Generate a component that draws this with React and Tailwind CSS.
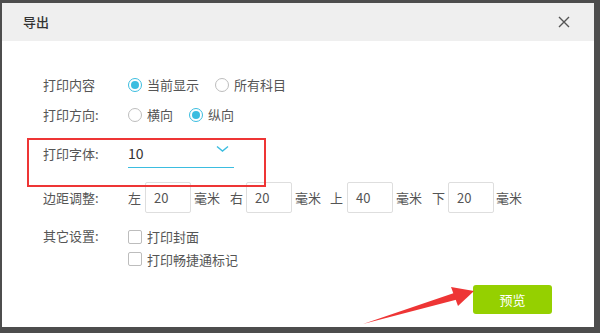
import React from 'react';

const font = { fontFamily: '"Noto Sans CJK SC", "Noto Sans", sans-serif' };

function Radio({ checked, label }) {
  return (
    <label className="flex items-center gap-[5px]">
      <span
        className={
          checked
            ? 'w-[14px] h-[14px] rounded-full border border-[#3bbde0] flex items-center justify-center'
            : 'w-[14px] h-[14px] rounded-full border border-[#bdbdbd]'
        }
      >
        {checked && <span className="w-[8px] h-[8px] rounded-full bg-[#3bbde0]" />}
      </span>
      <span>{label}</span>
    </label>
  );
}

function Check({ label }) {
  return (
    <label className="flex items-center gap-[5px]">
      <span className="w-[14px] h-[14px] rounded-[2px] border border-[#bdbdbd]" />
      <span>{label}</span>
    </label>
  );
}

function MarginInput({ value }) {
  return (
    <div className="w-[46px] h-[31px] border border-[#dedede] rounded-[2px] flex items-center pl-[8px]">
      {value}
    </div>
  );
}

export default function App() {
  return (
    <div className="w-[600px] h-[333px] bg-[#4d4d4d] relative overflow-hidden" style={font}>
      <div className="absolute left-[2px] top-[3px] w-[592px] h-[324px] bg-white flex flex-col text-[13px] text-[#555]">
        {/* header */}
        <div className="h-[38px] bg-[#efefef] flex items-center justify-between pl-[21px] pr-[24px]">
          <span className="text-[13px] font-medium text-[#333]">导出</span>
          <svg width="12" height="12" viewBox="0 0 12 12" className="text-[#555]">
            <path d="M1 1L11 11M11 1L1 11" stroke="currentColor" strokeWidth="1.4" />
          </svg>
        </div>

        {/* body */}
        <div className="flex flex-col pl-[41px] pt-[29px]">
          <div className="flex items-center h-[30px]">
            <span className="w-[85px]">打印内容</span>
            <div className="flex items-center gap-[16px]">
              <Radio checked label="当前显示" />
              <Radio label="所有科目" />
            </div>
          </div>

          <div className="flex items-center h-[30px]">
            <span className="w-[85px]">打印方向:</span>
            <div className="flex items-center gap-[16px]">
              <Radio label="横向" />
              <Radio checked label="纵向" />
            </div>
          </div>

          <div className="flex items-center h-[52px] pt-[4px]">
            <span className="w-[85px] -mt-[8px]">打印字体:</span>
            <div className="w-[106px] h-[28px] border-b border-[#3bbde0] flex items-center justify-between -mt-[8px]">
              <span className="text-[#333] text-[14px]">10</span>
              <svg width="13" height="8" viewBox="0 0 13 8" className="mr-[5px] -mt-[10px]">
                <path d="M1 1.5L6.5 6L12 1.5" fill="none" stroke="#3bbde0" strokeWidth="1.4" />
              </svg>
            </div>
          </div>

          <div className="flex items-center h-[31px]">
            <span className="w-[85px]">边距调整:</span>
            <div className="flex items-center">
              <span className="mr-[4px]">左</span>
              <MarginInput value="20" />
              <span className="ml-[3px] mr-[10px]">毫米</span>
              <span className="mr-[3px]">右</span>
              <MarginInput value="20" />
              <span className="ml-[3px] mr-[9px]">毫米</span>
              <span className="mr-[4px]">上</span>
              <MarginInput value="40" />
              <span className="ml-[3px] mr-[10px]">毫米</span>
              <span className="mr-[3px]">下</span>
              <MarginInput value="20" />
              <span className="ml-[2px]">毫米</span>
            </div>
          </div>

          <div className="flex items-start mt-[14px]">
            <span className="w-[85px] mt-[-1px]">其它设置:</span>
            <div className="flex flex-col gap-[3px]">
              <Check label="打印封面" />
              <Check label="打印畅捷通标记" />
            </div>
          </div>
        </div>

        <div className="flex justify-end pr-[42px] mt-[16px]">
          <button className="w-[79px] h-[29px] rounded-[3px] bg-[#95d000] text-white text-[13px]">预览</button>
        </div>
      </div>

      {/* annotation: red box */}
      <div className="absolute left-[27px] top-[138px] w-[239px] h-[49px] border-2 border-[#ee3535]" />

      {/* annotation: arrow */}
      <svg className="absolute left-0 top-0" width="600" height="333" viewBox="0 0 600 333">
        <path d="M363 324 L459 299 L457 292 Z" fill="#ee3535" />
        <path d="M474 291 L451 287 L458 306 Z" fill="#ee3535" />
      </svg>
    </div>
  );
}
